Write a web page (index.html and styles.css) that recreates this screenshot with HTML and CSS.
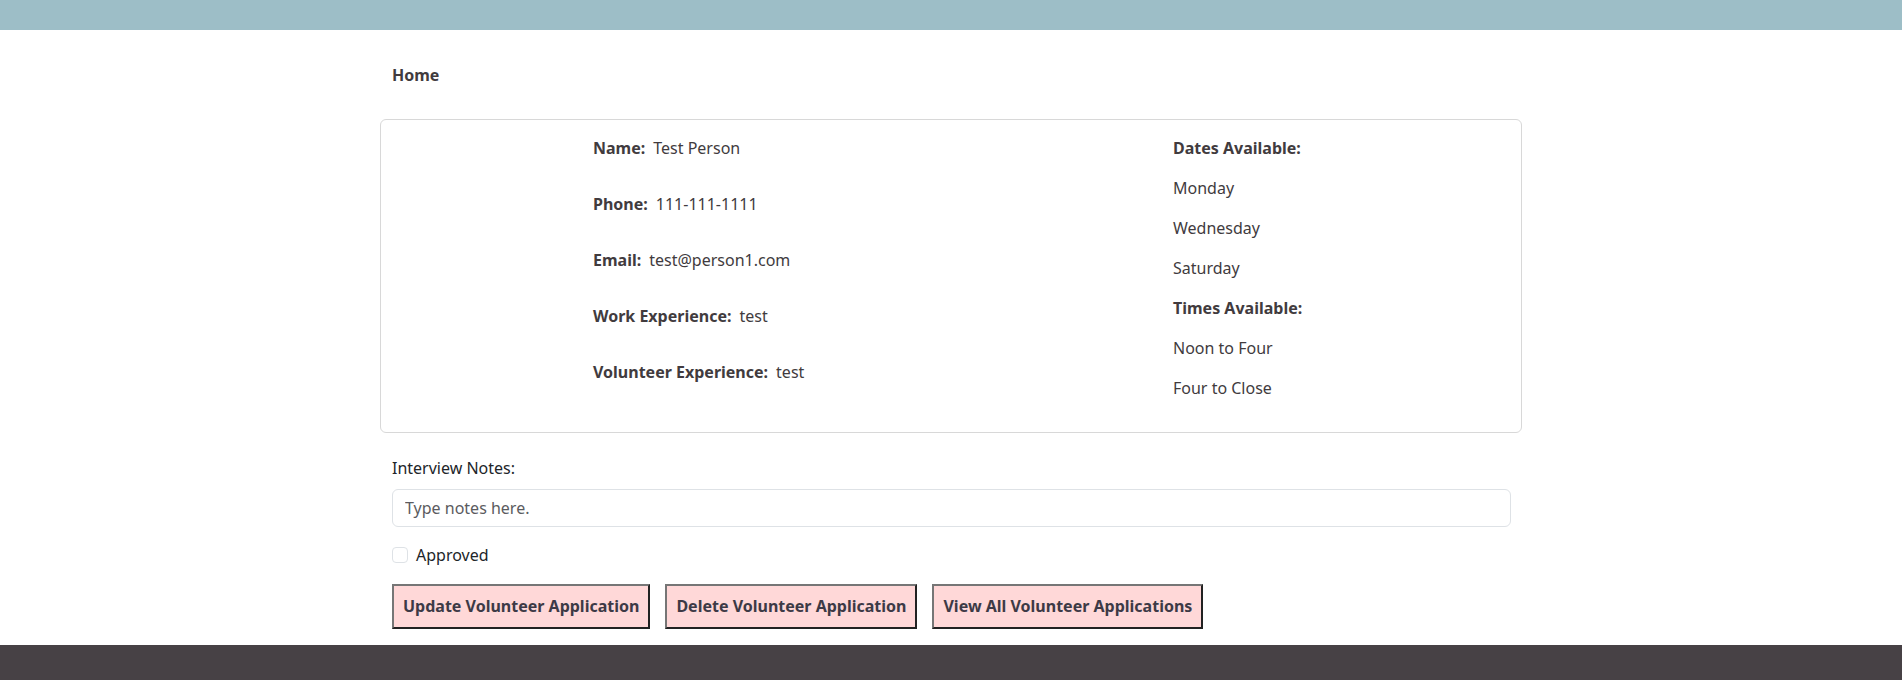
FILE: index.html
```html
<!DOCTYPE html>
<html lang="en">
<head>
<meta charset="utf-8">
<title>Volunteer Application</title>
<link rel="stylesheet" href="styles.css">
</head>
<body>
<header class="topbar"></header>
<main class="container">
  <nav class="nav"><a class="nav-link" href="#">Home</a></nav>
  <section class="card">
    <div class="spacer"></div>
    <div class="info">
      <p class="info-row"><span class="label">Name:</span>Test Person</p>
      <p class="info-row"><span class="label">Phone:</span>111-111-1111</p>
      <p class="info-row"><span class="label">Email:</span>test@person1.com</p>
      <p class="info-row"><span class="label">Work Experience:</span>test</p>
      <p class="info-row"><span class="label">Volunteer Experience:</span>test</p>
    </div>
    <div class="avail">
      <p class="avail-row label">Dates Available:</p>
      <p class="avail-row">Monday</p>
      <p class="avail-row">Wednesday</p>
      <p class="avail-row">Saturday</p>
      <p class="avail-row label">Times Available:</p>
      <p class="avail-row">Noon to Four</p>
      <p class="avail-row">Four to Close</p>
    </div>
  </section>
  <form class="form">
    <label class="notes-label" for="notes">Interview Notes:</label>
    <input class="notes-input" id="notes" type="text" placeholder="Type notes here.">
    <div class="check">
      <input class="check-box" id="approved" type="checkbox">
      <label class="check-label" for="approved">Approved</label>
    </div>
    <div class="actions">
      <button class="btn" type="button">Update Volunteer Application</button>
      <button class="btn" type="button">Delete Volunteer Application</button>
      <button class="btn" type="button">View All Volunteer Applications</button>
    </div>
  </form>
</main>
<footer class="footer"></footer>
</body>
</html>
```
FILE: styles.css
```css
* { box-sizing: border-box; }
html, body { margin: 0; padding: 0; }
body {
  font-family: "Noto Sans", "Open Sans", sans-serif;
  font-size: 16px;
  line-height: 24px;
  color: #413b3e;
  background: #fff;
}
.topbar {
  height: 30px;
  background: #9dbec7;
}
.container {
  width: 1142px;
  margin: 0 auto;
  padding: 33px 0 16px;
}
.nav {
  padding: 0 12px;
  margin-bottom: 32px;
}
.nav-link {
  font-weight: 700;
  color: #413b3e;
  text-decoration: none;
}
.card {
  border: 1px solid #d8d8d8;
  border-radius: 6px;
  padding: 16px 0;
  display: grid;
  grid-template-columns: 212px 580px 1fr;
}
.info-row { margin: 0 0 32px; }
.info-row:last-child { margin-bottom: 0; }
.label { font-weight: 700; margin-right: 8px; }
.avail-row { margin: 0 0 16px; }
.avail-row.label { margin-right: 0; }
.form {
  padding: 23px 12px 0;
}
.notes-label {
  display: block;
  color: #212529;
  margin-bottom: 9px;
}
.notes-input {
  display: block;
  width: 1119px;
  height: 38px;
  border: 1px solid #dee2e6;
  border-radius: 6px;
  padding: 6px 12px;
  font-family: inherit;
  font-size: 16px;
  color: #212529;
  margin-bottom: 16px;
}
.notes-input::placeholder { color: #5b5b60; }
.check {
  display: flex;
  align-items: center;
  gap: 8px;
  margin-bottom: 17px;
  color: #212529;
}
.check-box {
  appearance: none;
  -webkit-appearance: none;
  width: 16px;
  height: 16px;
  margin: 0;
  border: 1px solid #dee2e6;
  border-radius: 4px;
  background: #fff;
}
.actions {
  display: flex;
  gap: 15px;
}
.btn {
  font-family: inherit;
  font-size: 16px;
  font-weight: 700;
  line-height: 24px;
  color: #3d3a46;
  background: #ffd8d8;
  border: 2px solid;
  border-color: #767676 #222 #222 #767676;
  padding: 8px 9px 9px;
  border-radius: 0;
}
.footer {
  height: 40px;
  background: #474145;
}
```
